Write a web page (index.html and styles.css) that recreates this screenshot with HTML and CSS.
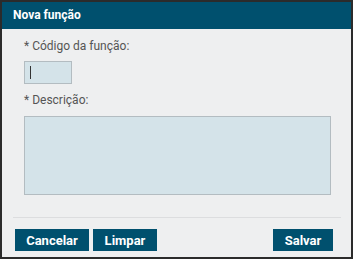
FILE: index.html
```html
<!DOCTYPE html>
<html lang="pt-BR">
<head>
    <meta charset="UTF-8">
    <title>Nova função</title>
    <link rel="stylesheet" href="styles.css">
</head>
<body>
    <div class="dialog">
        <div class="dialog-header">Nova função</div>

        <div class="dialog-body">
            <label class="field-label">* Código da função:</label>
            <span class="code-wrap">
                <input class="code-input" type="text">
                <span class="caret"></span>
            </span>

            <label class="field-label desc-label">* Descrição:</label>
            <textarea class="desc-input"></textarea>
        </div>

        <div class="dialog-footer">
            <button class="btn">Cancelar</button>
            <button class="btn btn-clear">Limpar</button>
            <button class="btn btn-save">Salvar</button>
        </div>
    </div>
</body>
</html>
```

FILE: styles.css
```css
html, body {
    margin: 0;
    padding: 0;
}

body {
    font-family: Roboto, 'Liberation Sans', sans-serif;
    font-size: 12px;
    background-color: #eeeff0;
}

.dialog {
    width: 349px;
    height: 255px;
    border: 2px solid #2b2b2b;
    display: flex;
    flex-direction: column;
    background-color: #eeeff0;
}

.dialog-header {
    height: 27px;
    line-height: 27px;
    padding-left: 11px;
    background-color: #00506e;
    color: #ffffff;
    font-weight: bold;
    font-size: 12px;
}

.dialog-body {
    flex: 1;
    display: flex;
    flex-direction: column;
    align-items: flex-start;
    padding: 10px 0 0 22px;
}

.field-label {
    display: block;
    line-height: 14px;
    color: #555555;
    margin-bottom: 8px;
}

.desc-label {
    margin-top: 9px;
    margin-bottom: 9px;
}

.code-wrap {
    position: relative;
    display: block;
}

.code-input,
.desc-input {
    box-sizing: border-box;
    margin: 0;
    background-color: #d4e3e9;
    border: 1px solid #b3bcc1;
    outline: none;
    font-family: inherit;
    font-size: 12px;
}

.code-input {
    display: block;
    width: 48px;
    height: 23px;
}

.caret {
    position: absolute;
    left: 6px;
    top: 5px;
    width: 1px;
    height: 13px;
    background-color: #333333;
}

.desc-input {
    display: block;
    width: 307px;
    height: 79px;
    resize: none;
}

.dialog-footer {
    display: flex;
    gap: 4px;
    margin: 0 10px 0 11px;
    padding: 11px 8px 6px 2px;
    border-top: 1px solid #dcdddf;
}

.btn {
    height: 22px;
    padding: 0;
    border: none;
    background-color: #00506e;
    color: #ffffff;
    font-family: inherit;
    font-size: 13px;
    font-weight: bold;
    width: 74px;
}

.btn-clear {
    width: 64px;
}

.btn-save {
    width: 60px;
    margin-left: auto;
}
```
